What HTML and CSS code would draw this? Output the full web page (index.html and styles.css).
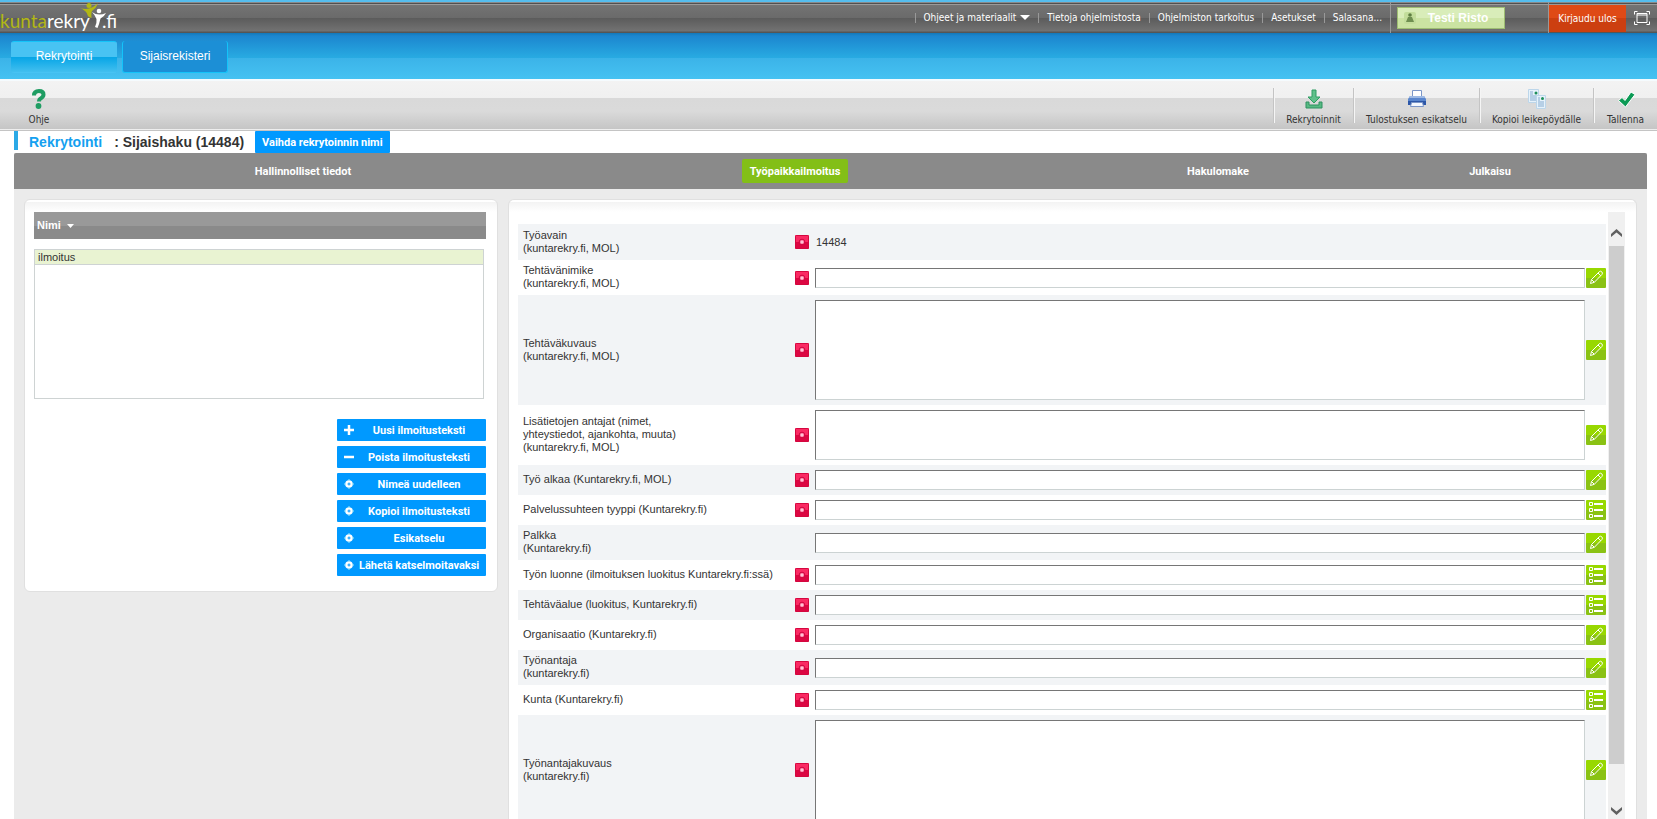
FILE: index.html
```html
<!DOCTYPE html>
<html lang="fi">
<head>
<meta charset="utf-8">
<title>Kuntarekry.fi</title>
<link rel="stylesheet" href="styles.css">
</head>
<body>
<svg class="sprite" aria-hidden="true">
  <defs>
    <linearGradient id="green" x1="0" y1="0" x2="0" y2="1"><stop offset="0.5" stop-color="#98d800"/><stop offset="0.5" stop-color="#8ac214"/></linearGradient>
    <linearGradient id="red" x1="0" y1="0" x2="0" y2="1"><stop offset="0.5" stop-color="#fa2a63"/><stop offset="0.5" stop-color="#dc0742"/></linearGradient>
    <symbol id="pencil" viewBox="0 0 20 20">
      <rect width="20" height="20" rx="1" fill="url(#green)"/>
      <path d="M4.500 15.500l1-4L13.200 3.800q1.300-1.200 2.600 0 1.300 1.300.1 2.700L8.300 14.300zM5.500 11.500l2.800 2.800M12 5l2.800 2.800" fill="none" stroke="#fff"/>
    </symbol>
    <symbol id="list" viewBox="0 0 20 20">
      <rect width="20" height="20" rx="1" fill="url(#green)"/>
      <path d="M3.500 2.500h3v3h-3zM3.500 8.500h3v3h-3zM3.500 14.500h3v3h-3z" fill="none" stroke="#fff"/>
      <path d="M8 3h9v2H8zM8 9h9v2H8zM8 15h9v2H8z" fill="#fff"/>
    </symbol>
    <symbol id="req" viewBox="0 0 14 14">
      <rect width="14" height="14" rx="1" fill="url(#red)"/>
      <rect x=".5" y=".5" width="13" height="13" rx="1" fill="none" stroke="#d3083f"/>
      <circle cx="7" cy="7" r="2.800" fill="#f76f96" stroke="#d0003c"/>
      <circle cx="7" cy="7" r="1.500" fill="#ffc4d5"/>
    </symbol>
    <symbol id="dot" viewBox="0 0 10 10">
      <circle cx="5" cy="5" r="3.800" fill="#fff"/>
      <path d="M5 0v2M5 8v2M0 5h2M8 5h2" stroke="#9fe9fb"/>
      <path d="M5 3.500v3M3.500 5h3" stroke="#09f"/>
    </symbol>
  </defs>
</svg>

<header class="topbar">
  <a class="logo" href="#" aria-label="kuntarekry.fi">
    <span class="logo-kunta">kunta</span><span>rekry</span>
    <svg class="logo-mark" width="32" height="28" viewBox="0 0 32 28" aria-hidden="true">
      <path d="M2 6q5 1.500 9 .5 4-1 9-5-2 5-6 7.500-1 2-.5 7-4-1-4.500-4.500Q7 8 2 6z" fill="#b2b715"/>
      <circle cx="11" cy="3.500" r="2.500" fill="#b2b715"/>
      <path d="M14 10q6 4.500 14 1-2 4-5.500 5.500Q21 23 19.500 26L17 25q2-4 1.500-8Q17 13 14 10z" fill="#fff"/>
      <circle cx="21" cy="9" r="2.300" fill="#fff"/>
    </svg>
    <span>.fi</span>
  </a>
  <nav class="links">
    <a href="#">Ohjeet ja materiaalit <svg width="10" height="5" viewBox="0 0 10 5" aria-hidden="true"><path d="M0 0h10L5 5z" fill="#fff"/></svg></a>
    <a href="#">Tietoja ohjelmistosta</a>
    <a href="#">Ohjelmiston tarkoitus</a>
    <a href="#">Asetukset</a>
    <a href="#">Salasana...</a>
  </nav>
  <div class="user-area">
    <button class="user" type="button">
      <svg width="12" height="12" viewBox="0 0 12 12" aria-hidden="true"><rect width="12" height="12" rx="2" fill="#c3dd9b"/><circle cx="6" cy="3" r="1.800" fill="#5d7d41"/><path d="M4 5h4l2 5H2z" fill="#6f8f50"/></svg>
      <span>Testi Risto</span>
    </button>
  </div>
  <a class="logout" href="#">Kirjaudu ulos</a>
  <button class="fullscreen" type="button" aria-label="Koko näyttö">
    <svg width="16" height="14" viewBox="0 0 16 14" aria-hidden="true"><path d="M.5 3.500v-3h3M12.500.5h3v3M15.500 10.500v3h-3M3.500 13.500h-3v-3" fill="none" stroke="#fff"/><path d="M3 2.500h10v9H3zM3 4h10" fill="none" stroke="#fff"/></svg>
  </button>
</header>

<nav class="mainnav">
  <a class="maintab current" href="#">Rekrytointi</a>
  <a class="maintab" href="#">Sijaisrekisteri</a>
</nav>

<div class="toolbar">
  <button class="tool help" type="button">
    <svg width="20" height="20" viewBox="0 0 20 20" aria-hidden="true"><path d="M5 6.500Q5 2 10 2q4.500 0 4.500 3.500 0 2.300-2.500 3.700-2 1-2 3.300" fill="none" stroke="#1f9d63" stroke-width="4"/><circle cx="9.500" cy="17" r="2.900" fill="#1f9d63"/></svg>
    <span>Ohje</span>
  </button>
  <button class="tool wide-80" type="button">
    <svg width="20" height="20" viewBox="0 0 20 20" aria-hidden="true"><path d="M8 1h4v7h4l-6 6-6-6h4z" fill="#5fc08a" stroke="#2f9d63"/><path d="M2 13h3v3h10v-3h3v6H2z" fill="#57b982" stroke="#2f9160"/></svg>
    <span>Rekrytoinnit</span>
  </button>
  <button class="tool wide-126" type="button">
    <svg width="20" height="20" viewBox="0 0 20 20" aria-hidden="true"><path d="M5.500 1.500h9V8h-9z" fill="#fff" stroke="#7b96c8"/><path d="M3 7h14l2 3v6H1v-6z" fill="#5a86cd"/><path d="M3 7h14l1 2H2z" fill="#9db9e4"/><path d="M1 12h18v4H1z" fill="#2d57a8"/><path d="M4.500 13.500h11l1 4h-13z" fill="#f4f8ff" stroke="#7b96c8"/></svg>
    <span>Tulostuksen esikatselu</span>
  </button>
  <button class="tool wide-114" type="button">
    <svg width="20" height="20" viewBox="0 0 20 20" aria-hidden="true"><path d="M1.500.5h10v13h-10z" fill="#e6f2fb" stroke="#bcd6ea"/><path d="M3 3h3M3 5h3M3 7h7M3 9h7M3 11h7" stroke="#86acd0"/><circle cx="9" cy="4" r="1.500" fill="#1e8f59"/><path d="M9.500 6.500h9v13h-9z" fill="#e6f2fb" stroke="#bcd6ea"/><path d="M11 9h2M11 11h2M11 13h6M11 15h6M11 17h6" stroke="#86acd0"/><circle cx="15.500" cy="9.500" r="1.500" fill="#1e8f59"/></svg>
    <span>Kopioi leikepöydälle</span>
  </button>
  <button class="tool wide-64" type="button">
    <svg width="20" height="20" viewBox="0 0 20 20" aria-hidden="true"><path d="M2.500 11.500L6 8.500l3 3L15 3l4 2.500L9.500 18z" fill="#0c9a55" stroke="#fff"/></svg>
    <span>Tallenna</span>
  </button>
</div>

<div class="titlebar">
  <h1><span class="section">Rekrytointi</span><span>: Sijaishaku (14484)</span></h1>
  <button class="rename" type="button">Vaihda rekrytoinnin nimi</button>
</div>

<main class="content">
  <nav class="steps">
    <a href="#">Hallinnolliset tiedot</a>
    <a class="active" href="#">Työpaikkailmoitus</a>
    <a href="#">Hakulomake</a>
    <a href="#">Julkaisu</a>
  </nav>
  <div class="panels">
    <section class="panel side">
      <button class="sort" type="button">Nimi <svg width="7" height="4" viewBox="0 0 7 4" aria-hidden="true"><path d="M0 0h7L3.500 4z" fill="#fff"/></svg></button>
      <ul class="notices"><li>ilmoitus</li></ul>
      <div class="actions">
        <button type="button"><svg width="10" height="10" viewBox="0 0 10 10" aria-hidden="true"><path d="M5 0v10M0 5h10" stroke="#fff" stroke-width="2.500"/></svg><span>Uusi ilmoitusteksti</span></button>
        <button type="button"><svg width="10" height="10" viewBox="0 0 10 10" aria-hidden="true"><path d="M0 5h10" stroke="#fff" stroke-width="2.500"/></svg><span>Poista ilmoitusteksti</span></button>
        <button type="button"><svg width="10" height="10" aria-hidden="true"><use href="#dot"/></svg><span>Nimeä uudelleen</span></button>
        <button type="button"><svg width="10" height="10" aria-hidden="true"><use href="#dot"/></svg><span>Kopioi ilmoitusteksti</span></button>
        <button type="button"><svg width="10" height="10" aria-hidden="true"><use href="#dot"/></svg><span>Esikatselu</span></button>
        <button type="button"><svg width="10" height="10" aria-hidden="true"><use href="#dot"/></svg><span>Lähetä katselmoitavaksi</span></button>
      </div>
    </section>

    <section class="panel form-panel">
      <div class="form-scroll">
        <form class="fields">
          <div class="field"><span class="label">Työavain<br>(kuntarekry.fi, MOL)</span><svg class="req"><use href="#req"/></svg><output class="value">14484</output></div>
          <div class="field"><label class="label" for="f1">Tehtävänimike<br>(kuntarekry.fi, MOL)</label><svg class="req"><use href="#req"/></svg><input id="f1" type="text"><button class="edit" type="button" aria-label="Muokkaa"><svg><use href="#pencil"/></svg></button></div>
          <div class="field"><label class="label" for="f2">Tehtäväkuvaus<br>(kuntarekry.fi, MOL)</label><svg class="req"><use href="#req"/></svg><textarea class="tall" id="f2"></textarea><button class="edit" type="button" aria-label="Muokkaa"><svg><use href="#pencil"/></svg></button></div>
          <div class="field"><label class="label" for="f3">Lisätietojen antajat (nimet,<br>yhteystiedot, ajankohta, muuta)<br>(kuntarekry.fi, MOL)</label><svg class="req"><use href="#req"/></svg><textarea id="f3"></textarea><button class="edit" type="button" aria-label="Muokkaa"><svg><use href="#pencil"/></svg></button></div>
          <div class="field"><label class="label" for="f4">Työ alkaa (Kuntarekry.fi, MOL)</label><svg class="req"><use href="#req"/></svg><input id="f4" type="text"><button class="edit" type="button" aria-label="Muokkaa"><svg><use href="#pencil"/></svg></button></div>
          <div class="field"><label class="label" for="f5">Palvelussuhteen tyyppi (Kuntarekry.fi)</label><svg class="req"><use href="#req"/></svg><input id="f5" type="text"><button class="edit" type="button" aria-label="Valitse"><svg><use href="#list"/></svg></button></div>
          <div class="field"><label class="label" for="f6">Palkka<br>(Kuntarekry.fi)</label><span class="req"></span><input id="f6" type="text"><button class="edit" type="button" aria-label="Muokkaa"><svg><use href="#pencil"/></svg></button></div>
          <div class="field"><label class="label" for="f7">Työn luonne (ilmoituksen luokitus Kuntarekry.fi:ssä)</label><svg class="req"><use href="#req"/></svg><input id="f7" type="text"><button class="edit" type="button" aria-label="Valitse"><svg><use href="#list"/></svg></button></div>
          <div class="field"><label class="label" for="f8">Tehtäväalue (luokitus, Kuntarekry.fi)</label><svg class="req"><use href="#req"/></svg><input id="f8" type="text"><button class="edit" type="button" aria-label="Valitse"><svg><use href="#list"/></svg></button></div>
          <div class="field"><label class="label" for="f9">Organisaatio (Kuntarekry.fi)</label><svg class="req"><use href="#req"/></svg><input id="f9" type="text"><button class="edit" type="button" aria-label="Muokkaa"><svg><use href="#pencil"/></svg></button></div>
          <div class="field"><label class="label" for="f10">Työnantaja<br>(kuntarekry.fi)</label><svg class="req"><use href="#req"/></svg><input id="f10" type="text"><button class="edit" type="button" aria-label="Muokkaa"><svg><use href="#pencil"/></svg></button></div>
          <div class="field"><label class="label" for="f11">Kunta (Kuntarekry.fi)</label><svg class="req"><use href="#req"/></svg><input id="f11" type="text"><button class="edit" type="button" aria-label="Valitse"><svg><use href="#list"/></svg></button></div>
          <div class="field"><label class="label" for="f12">Työnantajakuvaus<br>(kuntarekry.fi)</label><svg class="req"><use href="#req"/></svg><textarea class="tall" id="f12"></textarea><button class="edit" type="button" aria-label="Muokkaa"><svg><use href="#pencil"/></svg></button></div>
        </form>
      </div>
      <div class="scrollbar" aria-hidden="true">
        <svg width="11" height="9" viewBox="0 0 11 9"><path d="M0 8V5l5.500-5L11 5v3L5.500 3.500z" fill="#606060"/></svg>
        <div class="thumb"></div>
        <svg width="11" height="9" viewBox="0 0 11 9"><path d="M0 1v3l5.500 5L11 4V1L5.500 5.500z" fill="#606060"/></svg>
      </div>
    </section>
  </div>
</main>
</body>
</html>
```

FILE: styles.css
```css
* { box-sizing: border-box; }

body {
  display: flex;
  flex-direction: column;
  height: 100vh;
  margin: 0;
  overflow: hidden;
  background: #fff;
  color: #333;
  font: 11px/13px "Liberation Sans", Arial, sans-serif;
}

a { color: inherit; text-decoration: none; }
button { border: 0; padding: 0; background: none; color: inherit; font: inherit; cursor: pointer; }
svg { display: block; flex: none; }
.sprite { position: absolute; width: 0; height: 0; }

/* Top bar */
.topbar {
  display: flex;
  flex: none;
  align-items: stretch;
  height: 33px;
  border-top: 2px solid #55bdee;
  background: linear-gradient(#8a8a8a 0 1px, #505050 1px 2px, #9a9a9a 2px 3px, #737373 3px, #6a6a6a 16px, #5b5b5b 16px, #727272 29px, #555 30px);
  color: #fff;
  font-family: "DejaVu Sans Condensed", "DejaVu Sans", sans-serif;
  font-size: 10px;
}
.logo {
  display: flex;
  align-items: flex-end;
  margin-right: auto;
  font: 19px/24px Lato, sans-serif;
}
.logo-kunta { color: #b2b715; }
.logo-mark { align-self: flex-start; margin: 0 -8px 0 -12px; }
.links { display: flex; align-items: center; }
.links a {
  display: flex;
  align-items: center;
  gap: 4px;
  height: 10px;
  padding: 0 8px;
  border-left: 1px solid #999;
}
.user-area { display: flex; align-items: center; width: 159px; padding-left: 6px; border-left: 1px solid #999; border-right: 1px solid #999; }
.user {
  display: flex;
  align-items: center;
  width: 108px;
  height: 22px;
  padding-left: 6px;
  border: 1px solid #9dbd72;
  background: linear-gradient(#d9edb9 50%, #cbe3a2 50%);
  color: #fff;
  font: bold 12px/14px "Liberation Sans", Arial, sans-serif;
}
.user span { flex: 1; padding-right: 4px; }
.logout { display: flex; align-items: center; justify-content: center; width: 77px; margin: 3px 0 1px; background: linear-gradient(#df4a16 50%, #cc3f10 50%); }
.fullscreen { display: flex; align-items: center; justify-content: center; width: 31px; }

/* Main navigation */
.mainnav {
  display: flex;
  flex: none;
  gap: 5px;
  height: 48px;
  padding: 8px 11px;
  border-bottom: 2px solid #f5fbfe;
  background: linear-gradient(#1378b8 0, #1c86cf 3px, #28abe2 25px, #3bb3e8 25px, #46c2f2 46px);
}
.maintab {
  width: 106px;
  height: 32px;
  border: 1px solid #14c4fa;
  border-top: 0;
  border-radius: 3px;
  background: #1c8fd6;
  color: #fff;
  font-size: 12px;
  line-height: 30px;
  text-align: center;
}
.current { border-color: transparent; border-top: 1px solid #14c4fa; background: linear-gradient(#48c3f3 15px, #06a5e6 15px, #43bfef 30px); line-height: 28px; }

/* Toolbar */
.toolbar {
  display: flex;
  flex: none;
  height: 50px;
  border-bottom: 1px solid #c4c4c4;
  background: linear-gradient(#f3f3f3 0, #f0f0f0 17px, #d9d9d9 17px, #dadada 30px, #c5c5c5 48px, #eee 48px);
  font-family: "DejaVu Sans Condensed", "DejaVu Sans", sans-serif;
  font-size: 10px;
}
.tool {
  display: flex;
  flex-direction: column;
  align-items: center;
  gap: 3px;
  height: 35px;
  margin-top: 7px;
  padding-top: 1px;
  border-left: 1px solid #c4c4c4;
  box-shadow: inset 1px 0 #f5f5f5;
  white-space: nowrap;
}
.tool span { padding-top: 1px; }
.help { width: 78px; margin-right: auto; border: 0; box-shadow: none; }
.wide-80 { width: 80px; }
.wide-126 { width: 126px; }
.wide-114 { width: 114px; }
.wide-64 { width: 64px; }

/* Title */
.titlebar { display: flex; flex: none; gap: 11px; height: 22px; margin-left: 14px; }
h1 { display: flex; gap: 12px; margin: 0; font-size: 14px; line-height: 22px; }
.section { padding-left: 15px; background: linear-gradient(90deg, #2ba9e6 4px, transparent 4px) 0 0 / 100% 19px no-repeat; color: #14a0f0; }
.rename, .steps, .actions button { color: #fff; font-family: Roboto, "Liberation Sans", sans-serif; font-weight: bold; }
.rename { padding: 0 7px; border-radius: 1px; background: #09f; }

/* Content */
.content { display: flex; flex: 1; flex-direction: column; min-height: 0; margin: 0 10px 0 14px; background: #ebebeb; }
.steps {
  display: grid;
  flex: none;
  grid-template-columns: 578fr 406fr 440fr 104fr 105fr;
  align-items: center;
  justify-items: center;
  height: 36px;
  border-radius: 2px 2px 0 0;
  background: #8a8a8a;
}
.steps a { padding: 6px 8px 5px; border-radius: 2px; }
.steps .active { background: #83bf17; }
.panels { display: flex; flex: 1; align-items: flex-start; gap: 10px; min-height: 0; padding: 10px 10px 0; }
.panel {
  border: 1px solid #e0e0e0;
  border-radius: 6px;
  background: linear-gradient(#fff 2px, #f3f3f3 2px, #fff 12px);
}
.side { flex: none; width: 474px; padding: 12px 11px 15px 9px; }
.sort {
  display: flex;
  align-items: center;
  gap: 6px;
  width: 100%;
  height: 27px;
  padding-left: 3px;
  background: linear-gradient(#999 14px, #8a8a8a 14px);
  color: #fff;
  font-weight: bold;
}
.notices { height: 150px; margin: 10px 2px 20px 0; padding: 0; border: 1px solid #ced3d3; list-style: none; }
.notices li { padding: 1px 3px 0; border-bottom: 1px solid #ced3d3; background: #e9f3d2; }
.actions { display: flex; flex-direction: column; align-items: flex-end; gap: 5px; }
.actions button {
  display: flex;
  align-items: center;
  width: 149px;
  height: 22px;
  padding: 0 7px;
  border-radius: 1px;
  background: #09f;
  white-space: nowrap;
}
.actions span { flex: 1; padding-left: 5px; }

/* Form */
.form-panel { display: flex; flex: 1; gap: 2px; height: 100%; min-width: 0; padding: 12px 11px 0 9px; border-bottom: 0; border-radius: 6px 6px 0 0; }
.form-scroll { flex: 1; min-width: 0; height: 100%; overflow: hidden; }
.fields { padding-top: 12px; }
.field { display: grid; grid-template-columns: 277px 20px 1fr 21px; align-items: center; min-height: 30px; }
.field:first-child { min-height: 36px; }
.field:nth-child(odd) { background: #f2f4f6; }
.label { padding: 4px 5px 5px; }
.req { width: 14px; height: 14px; }
.value { padding-left: 1px; }
.field input, .field textarea {
  display: block;
  width: 100%;
  height: 20px;
  margin: 0;
  padding: 1px 3px;
  border: 1px solid;
  border-color: #767676 #ccd3d3 #ccd3d3 #767676;
  background: #fff;
  font: inherit;
  resize: none;
}
.field textarea { height: 50px; margin: 5px 0; }
.field .tall { height: 100px; }
.edit { justify-self: end; }
.edit svg { width: 20px; height: 20px; }
.scrollbar { display: flex; flex: none; flex-direction: column; align-items: center; width: 17px; height: 100%; padding: 17px 1px 4px; background: #f0f0f0; }
.thumb { align-self: stretch; flex: 1; margin: 8px 0 42px; background: #cdcdcd; }
```
